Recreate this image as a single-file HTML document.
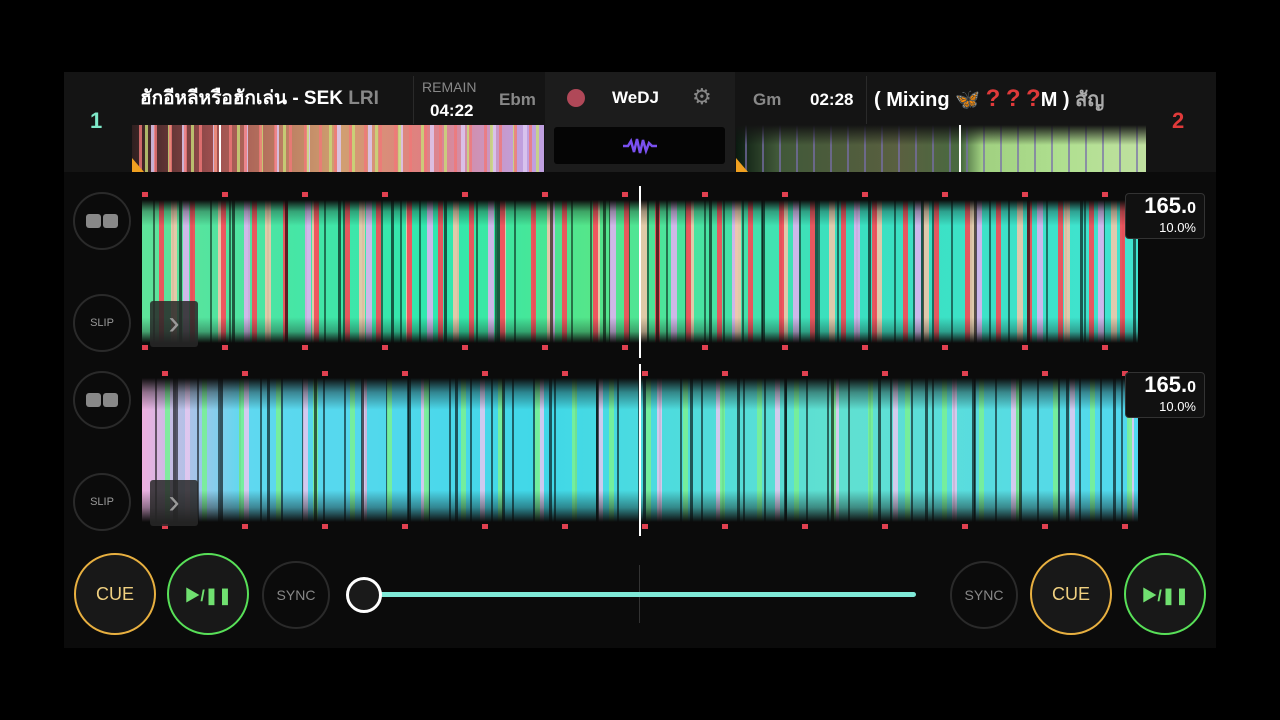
<!DOCTYPE html>
<html><head><meta charset="utf-8"><style>
*{margin:0;padding:0;box-sizing:border-box}
body{width:1280px;height:720px;background:#000;position:relative;overflow:hidden;font-family:"Liberation Sans","Noto Sans CJK SC",sans-serif;color:#fff}
.a{position:absolute}
.app{left:64px;top:72px;width:1152px;height:576px;background:#0b0b0b}
.top{left:64px;top:72px;width:1152px;height:100px;background:#141414}
.circ{position:absolute;border-radius:50%;display:flex;align-items:center;justify-content:center}
.wf1{background:
repeating-linear-gradient(90deg,transparent 0 37px,rgba(0,0,0,.6) 37px 40px,transparent 40px 53px),
repeating-linear-gradient(90deg,transparent 0 17px,rgba(240,80,90,.95) 17px 22px,transparent 22px 31px),
repeating-linear-gradient(90deg,transparent 0 29px,rgba(240,200,170,.9) 29px 35px,transparent 35px 47px),
repeating-linear-gradient(90deg,transparent 0 41px,rgba(220,180,240,.9) 41px 47px,transparent 47px 61px),
repeating-linear-gradient(90deg,transparent 0 11px,rgba(0,0,0,.5) 11px 13px,transparent 13px 19px),
linear-gradient(90deg,#5fe39a,#2fe8b0 30%,#55e68a 45%,#3ae0c0 70%,#40e4d0);}
.wf2{background:
repeating-linear-gradient(90deg,transparent 0 31px,rgba(0,0,0,.6) 31px 34px,transparent 34px 47px),
repeating-linear-gradient(90deg,transparent 0 23px,rgba(120,240,150,.9) 23px 28px,transparent 28px 37px),
repeating-linear-gradient(90deg,transparent 0 43px,rgba(230,200,240,.85) 43px 48px,transparent 48px 59px),
repeating-linear-gradient(90deg,transparent 0 13px,rgba(0,0,0,.55) 13px 15px,transparent 15px 21px),
linear-gradient(90deg,#f0b0e0,#60d8f0 10%,#40d8e8 40%,#60e0d0 70%,#50d8f0);}
.mask{background:linear-gradient(180deg,#0b0b0b 0,rgba(11,11,11,.3) 8%,rgba(11,11,11,0) 18%,rgba(11,11,11,0) 82%,rgba(11,11,11,.3) 92%,#0b0b0b 100%)}
.bpm{position:absolute;left:1125px;width:80px;height:46px;border:1px solid #333;border-radius:4px;background:#111;text-align:right;padding-right:8px}
.tk{position:absolute;height:6px;background:repeating-linear-gradient(90deg,#e04050 0 6px,transparent 6px 80px)}
</style></head><body>
<div class="a app"></div>
<div class="a top"></div>
<div class="a" style="left:90px;top:108px;font-size:22px;font-weight:bold;color:#7fe8c8">1</div>
<div class="a" style="left:1172px;top:108px;font-size:22px;font-weight:bold;color:#e03a3a">2</div>
<div class="a" style="left:140px;top:86px;font-size:19px;font-weight:bold;white-space:nowrap;width:268px;overflow:hidden;line-height:26px">ฮักอีหลีหรือฮักเล่น - SEK <span style="color:#888">LRI</span></div>
<div class="a" style="left:413px;top:76px;width:1px;height:48px;background:#2a2a2a"></div>
<div class="a" style="left:422px;top:79px;font-size:14px;color:#888">REMAIN</div>
<div class="a" style="left:430px;top:101px;font-size:17px;font-weight:bold">04:22</div>
<div class="a" style="left:499px;top:90px;font-size:17px;font-weight:bold;color:#888">Ebm</div>
<div class="a" style="left:132px;top:125px;width:412px;height:47px;background:
repeating-linear-gradient(90deg,transparent 0 7px,rgba(240,120,120,.8) 7px 10px,transparent 10px 15px),
repeating-linear-gradient(90deg,transparent 0 13px,rgba(200,220,120,.8) 13px 16px,transparent 16px 23px),
repeating-linear-gradient(90deg,transparent 0 19px,rgba(220,200,240,.85) 19px 23px,transparent 23px 31px),
linear-gradient(90deg,#302020,#a05050 20%,#d0a070 50%,#e08080 70%,#c0a0e0 95%)"></div>
<div class="a" style="left:219px;top:125px;width:2px;height:47px;background:#fff"></div>
<div class="a" style="left:132px;top:158px;width:0;height:0;border-left:12px solid #f0a020;border-top:14px solid transparent"></div>
<div class="a" style="left:545px;top:72px;width:190px;height:100px;background:#1c1c1c"></div>
<div class="circ" style="left:567px;top:89px;width:18px;height:18px;background:#b04858"></div>
<div class="a" style="left:612px;top:88px;font-size:17px;font-weight:bold">WeDJ</div>
<div class="a" style="left:692px;top:84px;font-size:22px;color:#888">⚙</div>
<div class="a" style="left:554px;top:127px;width:171px;height:37px;background:#050505;border-radius:3px"></div>
<svg class="a" style="left:622px;top:136px" width="36" height="20" viewBox="0 0 36 20"><path d="M1 10 L6 10 L9 5 L12 16 L15 3 L18 17 L21 4 L24 15 L27 7 L30 10 L35 10" fill="none" stroke="#7a50f0" stroke-width="2.5"/></svg>
<div class="a" style="left:753px;top:90px;font-size:17px;font-weight:bold;color:#888">Gm</div>
<div class="a" style="left:810px;top:90px;font-size:17px;font-weight:bold">02:28</div>
<div class="a" style="left:866px;top:76px;width:1px;height:48px;background:#2a2a2a"></div>
<div class="a" style="left:874px;top:86px;font-size:20px;font-weight:bold;white-space:nowrap;width:270px;overflow:hidden;line-height:26px">( Mixing <span style="color:#e0902a">🦋</span> <span style="color:#e03a3a;font-size:24px">?</span> <span style="color:#e03a3a;font-size:24px">?</span> <span style="color:#e03a3a;font-size:24px">?</span>M ) <span style="color:#aaa">สัญ</span></div>
<div class="a" style="left:736px;top:125px;width:410px;height:47px;background:
repeating-linear-gradient(90deg,transparent 0 9px,rgba(120,110,170,.7) 9px 11px,transparent 11px 17px),
linear-gradient(90deg,#0a1a10,#405838 10%,#5a6040 40%,#486a40 55%,#a0d080 60%,#b0e090 80%,#c0e0a0 100%)"></div>
<div class="a" style="left:736px;top:125px;width:410px;height:20px;background:linear-gradient(180deg,#141414,rgba(20,20,20,0))"></div>
<div class="a" style="left:959px;top:125px;width:2px;height:47px;background:#fff"></div>
<div class="a" style="left:736px;top:158px;width:0;height:0;border-left:12px solid #f0a020;border-top:14px solid transparent"></div>
<div class="a wf1" style="left:142px;top:200px;width:996px;height:143px"></div>
<div class="a mask" style="left:142px;top:200px;width:996px;height:143px"></div>
<div class="a wf2" style="left:142px;top:378px;width:996px;height:144px"></div>
<div class="a mask" style="left:142px;top:378px;width:996px;height:144px;background:linear-gradient(180deg,#0b0b0b 0,rgba(11,11,11,.4) 10%,rgba(11,11,11,0) 22%,rgba(11,11,11,0) 78%,rgba(11,11,11,.4) 90%,#0b0b0b 100%)"></div>
<div class="a" style="left:639px;top:186px;width:2px;height:172px;background:#fff"></div>
<div class="a" style="left:639px;top:364px;width:2px;height:172px;background:#fff"></div>
<div class="a" style="left:639px;top:565px;width:1px;height:58px;background:#333"></div>
<div class="tk" style="left:142px;top:192px;width:996px;height:5px"></div>
<div class="tk" style="left:142px;top:345px;width:996px;height:5px"></div>
<div class="tk" style="left:162px;top:371px;width:976px;height:5px"></div>
<div class="tk" style="left:162px;top:524px;width:976px;height:5px"></div>
<div class="circ" style="left:73px;top:192px;width:58px;height:58px;border:2px solid #2a2a2a"><span style="display:inline-block;width:15px;height:14px;background:#888;border-radius:3px;margin-right:2px"></span><span style="display:inline-block;width:15px;height:14px;background:#888;border-radius:3px"></span></div>
<div class="circ" style="left:73px;top:294px;width:58px;height:58px;border:2px solid #2a2a2a;font-size:11px;color:#999">SLIP</div>
<div class="circ" style="left:73px;top:371px;width:58px;height:58px;border:2px solid #2a2a2a"><span style="display:inline-block;width:15px;height:14px;background:#888;border-radius:3px;margin-right:2px"></span><span style="display:inline-block;width:15px;height:14px;background:#888;border-radius:3px"></span></div>
<div class="circ" style="left:73px;top:473px;width:58px;height:58px;border:2px solid #2a2a2a;font-size:11px;color:#999">SLIP</div>
<div class="a" style="left:150px;top:301px;width:48px;height:46px;background:rgba(40,40,40,.85);border-radius:3px;color:#999;font-size:34px;text-align:center;line-height:44px">›</div>
<div class="a" style="left:150px;top:480px;width:48px;height:46px;background:rgba(40,40,40,.85);border-radius:3px;color:#999;font-size:34px;text-align:center;line-height:44px">›</div>
<div class="bpm" style="top:193px"><div style="font-size:22px;font-weight:bold;line-height:24px">165.<span style="font-size:16px">0</span></div><div style="font-size:13px;line-height:14px">10.0%</div></div>
<div class="bpm" style="top:372px"><div style="font-size:22px;font-weight:bold;line-height:24px">165.<span style="font-size:16px">0</span></div><div style="font-size:13px;line-height:14px">10.0%</div></div>
<div class="circ" style="left:74px;top:553px;width:82px;height:82px;border:2px solid #e8b040;background:#181818;font-size:18px;color:#f0d080">CUE</div>
<div class="circ" style="left:167px;top:553px;width:82px;height:82px;border:2px solid #58e058;background:#181818;font-size:16px;color:#70e070;font-weight:bold">▶/❚❚</div>
<div class="circ" style="left:262px;top:561px;width:68px;height:68px;border:2px solid #2a2a2a;font-size:14px;color:#888">SYNC</div>
<div class="a" style="left:370px;top:592px;width:546px;height:5px;background:#80ead8;border-radius:3px"></div>
<div class="circ" style="left:346px;top:577px;width:36px;height:36px;border:3px solid #fff;background:#1a1a1a"></div>
<div class="circ" style="left:950px;top:561px;width:68px;height:68px;border:2px solid #2a2a2a;font-size:14px;color:#888">SYNC</div>
<div class="circ" style="left:1030px;top:553px;width:82px;height:82px;border:2px solid #e8b040;background:#181818;font-size:18px;color:#f0d080">CUE</div>
<div class="circ" style="left:1124px;top:553px;width:82px;height:82px;border:2px solid #58e058;background:#181818;font-size:16px;color:#70e070;font-weight:bold">▶/❚❚</div>
</body></html>
